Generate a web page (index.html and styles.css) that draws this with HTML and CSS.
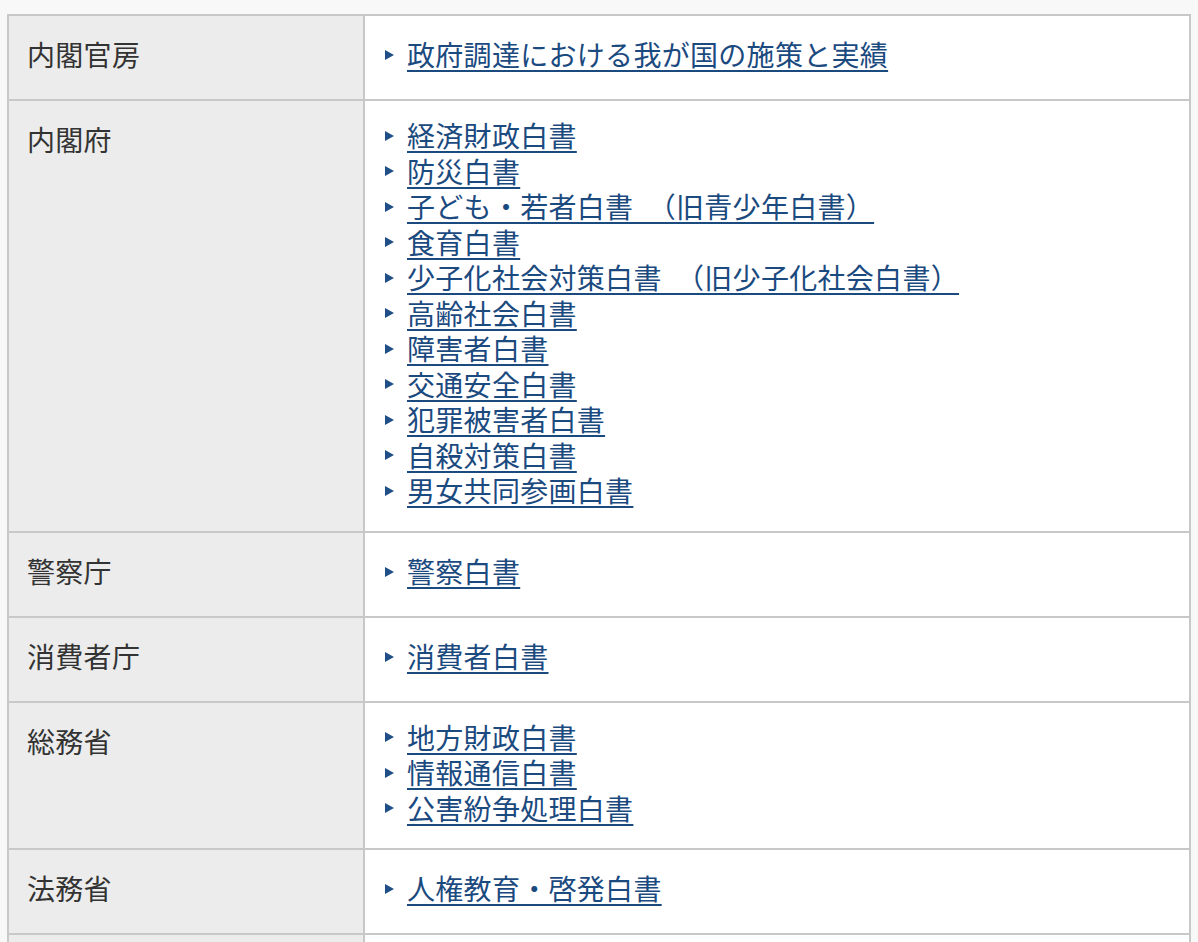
FILE: index.html
```html
<!DOCTYPE html>
<html lang="ja">
<head>
<meta charset="utf-8">
<title>白書一覧</title>
<link rel="stylesheet" href="styles.css">
</head>
<body>
<div class="page">
<table class="wp-table">
<tbody>
<tr>
<th class="org">内閣官房</th>
<td class="links"><ul class="list"><li><a href="#">政府調達における我が国の施策と実績</a></li></ul></td>
</tr>
<tr>
<th class="org">内閣府</th>
<td class="links"><ul class="list">
<li><a href="#">経済財政白書</a></li>
<li><a href="#">防災白書</a></li>
<li><a href="#">子ども・若者白書　（旧青少年白書）</a></li>
<li><a href="#">食育白書</a></li>
<li><a href="#">少子化社会対策白書　（旧少子化社会白書）</a></li>
<li><a href="#">高齢社会白書</a></li>
<li><a href="#">障害者白書</a></li>
<li><a href="#">交通安全白書</a></li>
<li><a href="#">犯罪被害者白書</a></li>
<li><a href="#">自殺対策白書</a></li>
<li><a href="#">男女共同参画白書</a></li>
</ul></td>
</tr>
<tr>
<th class="org">警察庁</th>
<td class="links"><ul class="list"><li><a href="#">警察白書</a></li></ul></td>
</tr>
<tr>
<th class="org">消費者庁</th>
<td class="links"><ul class="list"><li><a href="#">消費者白書</a></li></ul></td>
</tr>
<tr>
<th class="org">総務省</th>
<td class="links"><ul class="list">
<li><a href="#">地方財政白書</a></li>
<li><a href="#">情報通信白書</a></li>
<li><a href="#">公害紛争処理白書</a></li>
</ul></td>
</tr>
<tr>
<th class="org">法務省</th>
<td class="links"><ul class="list"><li><a href="#">人権教育・啓発白書</a></li></ul></td>
</tr>
<tr>
<th class="org">外務省</th>
<td class="links"><ul class="list"><li><a href="#">外交青書</a></li></ul></td>
</tr>
</tbody>
</table>
</div>
</body>
</html>
```

FILE: styles.css
```css
html, body {
  margin: 0;
  padding: 0;
  background: #f8f8f8;
}
body {
  font-family: "Noto Sans CJK JP", "Noto Sans", sans-serif;
  color: #333333;
  font-size: 28px;
  letter-spacing: 0.3px;
}
.page {
  padding: 14px 7px 0 7px;
}
.wp-table {
  width: 100%;
  border-collapse: collapse;
  border: 2px solid #c8c8c8;
  background: #ffffff;
}
.wp-table th,
.wp-table td {
  border: 2px solid #c8c8c8;
}
.org {
  width: 318px;
  background: #ececec;
  text-align: left;
  font-weight: normal;
  vertical-align: top;
  padding: 17px 18px 23px 18px;
  line-height: 43px;
}
.links {
  vertical-align: middle;
  padding: 17px 20px 22px 20px;
}
.list {
  list-style: none;
  margin: 0;
  padding: 0;
}
.list li {
  line-height: 35.5px;
  display: flex;
  align-items: center;
}
.list li::before {
  content: "";
  display: inline-block;
  width: 0;
  height: 0;
  border-top: 5px solid transparent;
  border-bottom: 5px solid transparent;
  border-left: 9px solid #1f4f86;
  margin-right: 13px;
  flex: none;
}
.list a {
  color: #1b4a7f;
  text-decoration: underline;
  text-decoration-thickness: 2px;
  text-underline-offset: 4px;
}
```
